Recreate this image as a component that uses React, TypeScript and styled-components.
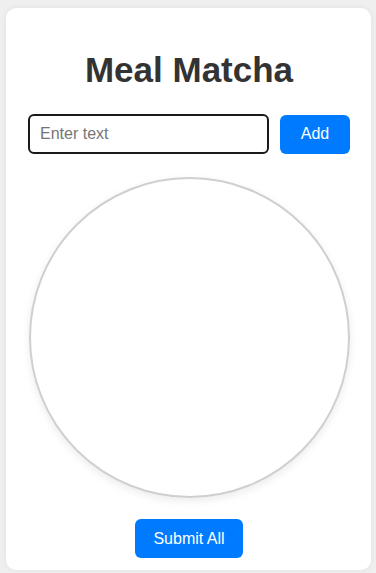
import React, { useState } from 'react';
import styled, { createGlobalStyle } from 'styled-components';

const GlobalStyle = createGlobalStyle`
  * {
    box-sizing: border-box;
  }
  body {
    margin: 0;
    background: #efefef;
    font-family: "Liberation Sans", Arial, sans-serif;
  }
`;

export default function App() {
  const [text, setText] = useState('');

  return (
    <>
      <GlobalStyle />
      <Page>
        <Card>
          <Title>Meal Matcha</Title>
          <InputRow>
            <TextInput
              placeholder="Enter text"
              value={text}
              onChange={(e) => setText(e.target.value)}
            />
            <Button>Add</Button>
          </InputRow>
          <Wheel />
          <Footer>
            <Button wide>Submit All</Button>
          </Footer>
        </Card>
      </Page>
    </>
  );
}

const Page = styled.div`
  padding: 8px 5px 3px 6px;
`;

const Card = styled.div`
  background: #fff;
  border-radius: 10px;
  padding: 42px 21px 12px 22px;
  box-shadow: 0 0 6px rgba(0, 0, 0, 0.06);
`;

const Title = styled.h1`
  margin: 0 0 24px;
  font-size: 35px;
  line-height: 40px;
  font-weight: 700;
  color: #333;
  text-align: center;
`;

const InputRow = styled.div`
  display: flex;
  align-items: center;
  gap: 11px;
`;

const TextInput = styled.input`
  width: 241px;
  height: 40px;
  padding: 0 10px;
  border: 2px solid #1a1a1a;
  border-radius: 6px;
  font-family: "Liberation Sans", Arial, sans-serif;
  font-size: 16px;
  color: #333;
  outline: none;

  &::placeholder {
    color: #757575;
  }
`;

const Button = styled.button<{ wide?: boolean }>`
  width: ${(p) => (p.wide ? '108px' : '70px')};
  height: 39px;
  border: none;
  border-radius: 6px;
  background: #007bff;
  color: #fff;
  font-family: "Liberation Sans", Arial, sans-serif;
  font-size: 16px;
  cursor: pointer;
`;

const Wheel = styled.div`
  width: 321px;
  height: 321px;
  margin: 23px auto 0;
  border: 2px solid #cfcfcf;
  border-radius: 50%;
  box-shadow: 0 3px 8px rgba(0, 0, 0, 0.08);
`;

const Footer = styled.div`
  display: flex;
  justify-content: center;
  margin-top: 21px;
`;
